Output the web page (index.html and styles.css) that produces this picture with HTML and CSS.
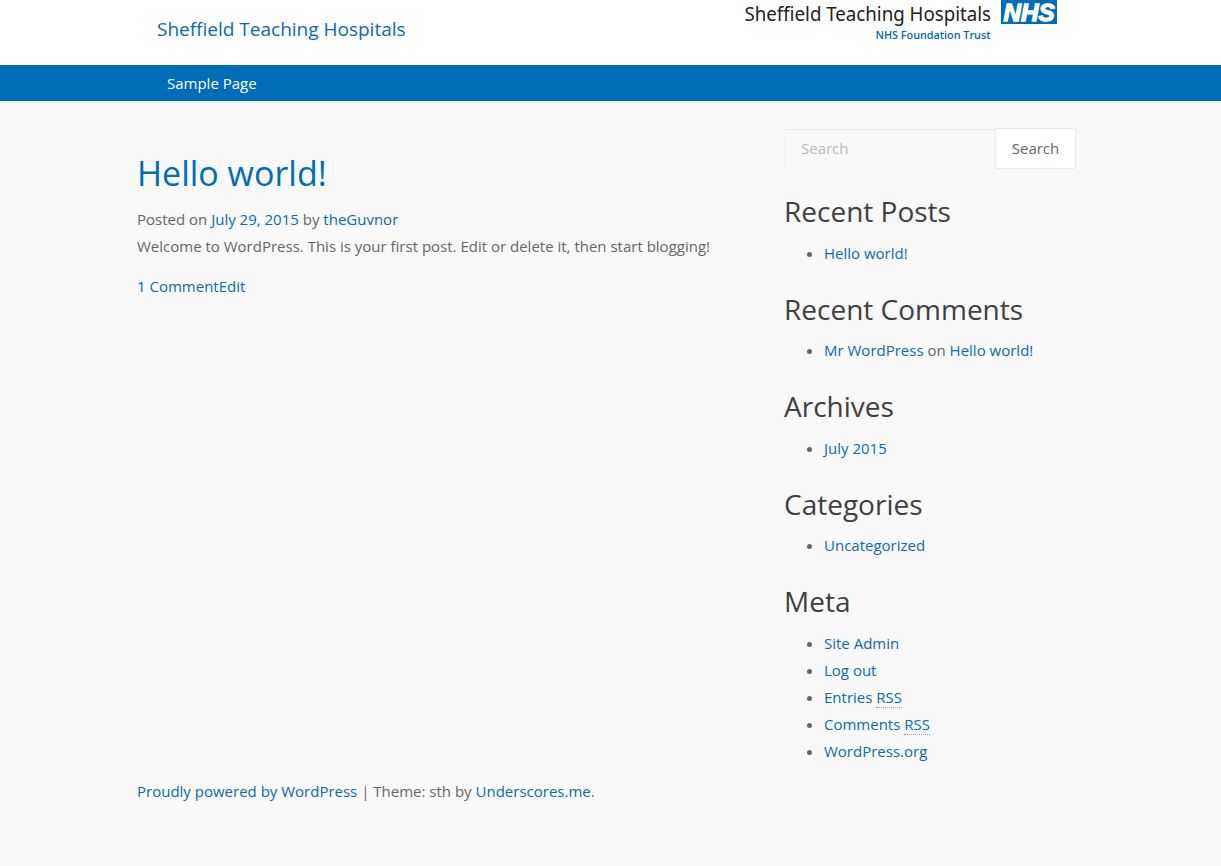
FILE: index.html
```html
<!DOCTYPE html>
<html lang="en">
<head>
<meta charset="utf-8">
<title>Sheffield Teaching Hospitals</title>
<link rel="stylesheet" href="styles.css">
</head>
<body>
<header class="site-header">
  <a class="site-title" href="#">Sheffield Teaching Hospitals</a>
  <div class="brand">
    <div class="brand-text">
      <svg class="brand-name" width="248" height="27" viewBox="0 0 248 27"><text x="0.5" y="21.2" textLength="246.5" lengthAdjust="spacingAndGlyphs">Sheffield Teaching Hospitals</text></svg>
      <svg class="brand-trust" width="117" height="16" viewBox="0 0 117 16"><text x="0.5" y="12" textLength="115" lengthAdjust="spacingAndGlyphs">NHS Foundation Trust</text></svg>
    </div>
    <svg class="nhs" width="56" height="24" viewBox="0 0 56 24"><rect width="56" height="24" fill="#006db8"/><text x="2.5" y="21" textLength="51" lengthAdjust="spacingAndGlyphs">NHS</text></svg>
  </div>
</header>
<nav class="main-nav"><a href="#">Sample Page</a></nav>
<div class="content">
  <main class="posts">
    <h1><a href="#">Hello world!</a></h1>
    <p class="meta">Posted on <a href="#">July 29, 2015</a> by <a href="#">theGuvnor</a></p>
    <p class="entry">Welcome to WordPress. This is your first post. Edit or delete it, then start blogging!</p>
    <p class="post-links"><a href="#">1 Comment</a><a href="#">Edit</a></p>
  </main>
  <aside class="sidebar">
    <form class="search"><input type="text" placeholder="Search"><button type="button">Search</button></form>
    <section><h2>Recent Posts</h2><ul><li><a href="#">Hello world!</a></li></ul></section>
    <section><h2>Recent Comments</h2><ul><li><a href="#">Mr WordPress</a> on <a href="#">Hello world!</a></li></ul></section>
    <section><h2>Archives</h2><ul><li><a href="#">July 2015</a></li></ul></section>
    <section><h2>Categories</h2><ul><li><a href="#">Uncategorized</a></li></ul></section>
    <section><h2>Meta</h2><ul>
      <li><a href="#">Site Admin</a></li>
      <li><a href="#">Log out</a></li>
      <li><a href="#">Entries <abbr>RSS</abbr></a></li>
      <li><a href="#">Comments <abbr>RSS</abbr></a></li>
      <li><a href="#">WordPress.org</a></li>
    </ul></section>
  </aside>
</div>
<footer class="site-footer"><a href="#">Proudly powered by WordPress</a> | Theme: sth by <a href="#">Underscores.me</a>.</footer>
</body>
</html>
```
FILE: styles.css
```css
* { box-sizing: border-box; }
body { margin: 0; background: #f9f9f9; color: #666; font: 15px/27px "Open Sans", sans-serif; }
a { color: #0b69b5; text-decoration: none; }
h1, h2, p, ul { margin: 0; font-weight: 400; }
.site-header { display: flex; height: 65px; padding-left: 157px; background: #fff; }
.site-title { width: 587px; padding-top: 16px; font-size: 19px; }
.brand { display: flex; height: 44px; gap: 9px; }
.brand-text { display: flex; flex-direction: column; align-items: flex-end; width: 248px; }
.brand-name, .brand-trust, .nhs { display: block; flex: none; overflow: visible; }
.brand-name { font: 19.5px "Noto Sans", sans-serif; fill: #222; }
.brand-trust { font: 600 11.5px "Open Sans", sans-serif; fill: #0069b5; }
.nhs { font: italic bold 23.2px "Liberation Sans", sans-serif; }
.nhs text { fill: #fff; stroke: #fff; stroke-width: 1.3px; }
.main-nav { height: 36px; padding: 5px 0 0 167px; background: #006db8; }
.main-nav a { color: #fff; }
.content { display: flex; padding: 27px 0 0 137px; }
.posts { width: 647px; padding-top: 23px; }
h1 { font-size: 34px; line-height: 44px; margin-bottom: 11px; }
h1 a { color: #006db8; }
.post-links { margin-top: 13px; }
.sidebar { width: 292px; }
.search { display: flex; height: 41px; margin-bottom: 23px; }
.search input, .search button { margin: 0; font: 15px "Open Sans", sans-serif; color: #666; }
.search input { width: 211px; height: 39px; margin-top: 1px; padding: 0 16px 2px; border: solid; border-width: 1px 0 0 1px; border-color: #e9e9e9 transparent transparent #f3f3f3; border-radius: 2px 0 0 0; background: #f9f9f9; }
.search input::placeholder { color: #bbb; }
.search button { width: 81px; height: 41px; padding: 0 0 2px; border: 1px solid #ebebeb; border-radius: 0 2px 2px 0; background: #fff; }
h2 { color: #404040; font-size: 28px; line-height: 38px; margin-bottom: 9.5px; }
section { margin-bottom: 23px; }
section:last-child { margin-bottom: 0; }
ul { padding-left: 40px; }
abbr { border-bottom: 1px dotted #999; }
.site-footer { margin-left: 137px; padding-top: 13px; }
```
